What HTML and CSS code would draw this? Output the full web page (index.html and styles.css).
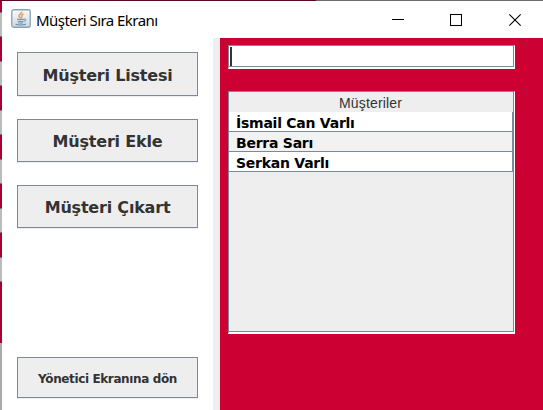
FILE: index.html
```html
<!DOCTYPE html>
<html lang="tr">
<head>
<meta charset="utf-8">
<title>Müşteri Sıra Ekranı</title>
<link rel="stylesheet" href="styles.css">
</head>
<body>
<div class="desktop">
  <div class="window">
    <header class="titlebar">
      <svg class="app-icon" width="20" height="19" viewBox="0 0 20 19">
        <defs><linearGradient id="tile" x1="0" y1="0" x2="0" y2="1"><stop offset="0" stop-color="#f8fafb"/><stop offset="1" stop-color="#cfd9e1"/></linearGradient></defs>
        <rect x=".75" y=".75" width="18.5" height="17.5" rx="2" fill="url(#tile)" stroke="#8ba1b3" stroke-width="1.3"/>
        <path d="M10.7 2.7C11 5 7 5.5 8 7.500L9.600 9.300M12.500 5C9.500 6 11.600 7.400 10.200 9.200" fill="none" stroke="#e99a55" stroke-width="1.5"/>
        <path d="M6 10.300h7.300M6.600 12.300h6M7.300 14h4.600M13.300 10.100c2.500-.4 2.300 2-.6 2.300" fill="none" stroke="#6387a5" stroke-width="1"/>
        <path d="M4.600 15c2 1.400 8 1.400 10.500 0" fill="none" stroke="#6387a5" stroke-width="1.1"/>
      </svg>
      <span class="title">Müşteri Sıra Ekranı</span>
      <svg class="controls" width="151" height="35" viewBox="0 0 151 35" fill="none" stroke="#000">
        <path d="M0 15.500h12M58.500 10.500h11v11h-11z" shape-rendering="crispEdges"/>
        <path d="M117.300 10.300l11.400 11.400M128.700 10.300l-11.400 11.400" stroke-width="1.1"/>
      </svg>
    </header>
    <div class="content">
      <nav class="menu">
        <button class="btn first">Müşteri Listesi</button>
        <button class="btn">Müşteri Ekle</button>
        <button class="btn">Müşteri Çıkart</button>
        <button class="btn back">Yönetici Ekranına dön</button>
      </nav>
      <div class="divider"></div>
      <main class="panel">
        <div class="field"><span class="caret"></span></div>
        <div class="table">
          <div class="head">Müşteriler</div>
          <div class="row">İsmail Can Varlı</div>
          <div class="row alt">Berra Sarı</div>
          <div class="row">Serkan Varlı</div>
        </div>
      </main>
    </div>
  </div>
</div>
</body>
</html>
```
FILE: styles.css
```css
* { box-sizing: border-box; }
body { margin: 0; overflow: hidden; }
.desktop {
  width: 543px; height: 410px; padding: 1px 0 0 2px;
  background:
    linear-gradient(90deg, #5c0a24 316px, #6d6d6d 316px) 0 0 / 100% 1px no-repeat,
    linear-gradient(#a8abad, #a8abad) 0 343px / 2px 67px no-repeat,
    linear-gradient(#a80030, #a80030) 0 282px / 2px 61px no-repeat,
    repeating-linear-gradient(#a80030 0 12px, #777 12px 13px, #bbb 13px 36px, #777 36px 37px, #a80030 37px 49px);
}
.window { width: 541px; height: 409px; background: #fff; }
.titlebar { height: 37px; display: flex; align-items: flex-start; padding: 8px 0 0 9px; }
.title {
  margin: 1px 0 0 5px; width: 356px; white-space: nowrap;
  font: 15px/20px "Noto Sans", sans-serif; letter-spacing: -.55px; color: #000;
}
.controls { margin-top: -5px; }
.content { display: flex; height: 372px; }
.menu { width: 211px; padding: 14px 15px 12px; display: flex; flex-direction: column; gap: 23px; }
.btn {
  display: flex; align-items: center; justify-content: center;
  width: 181px; height: 43px; flex: none; padding: 3px 0 0;
  background: #eee; border: 1px solid #7a8a99; border-radius: 0; box-shadow: 0 1px #eee;
  color: #333; font: bold 16px/20px "DejaVu Sans", sans-serif;
  letter-spacing: -.2px; white-space: nowrap;
}
.btn.first { height: 44px; }
.btn.back { height: 41px; margin-top: auto; font-size: 12px; letter-spacing: -.38px; }
.divider { width: 7px; background: #eee; }
.panel { flex: 1; background: #cc0033; padding: 7px 0 0 8px; }
.field, .table { width: 287px; border: 1px solid #7a8a99; border-right-color: #fff; border-bottom: 2px solid #fff; }
.field { height: 24px; padding: 1px; background: #fff; box-shadow: inset -1px -1px #7a8a99; }
.caret { display: block; width: 2px; height: 19px; background: #333; }
.table { height: 243px; margin-top: 22px; padding-right: 1px; background: #eee; box-shadow: inset -1px -1px #7a8a99; }
.head { height: 20px; padding-right: 1px; font: 14px/23px "Liberation Sans", sans-serif; letter-spacing: .15px; color: #333; text-align: center; }
.row {
  height: 20px; padding-left: 7px; background: #fff;
  border-right: 1px solid #7a8a99; border-bottom: 1px solid #7a8a99;
  font: bold 14px/22px "DejaVu Sans", sans-serif; letter-spacing: -.25px; color: #000; white-space: nowrap;
}
.alt { background: #f2f2f2; }
```
